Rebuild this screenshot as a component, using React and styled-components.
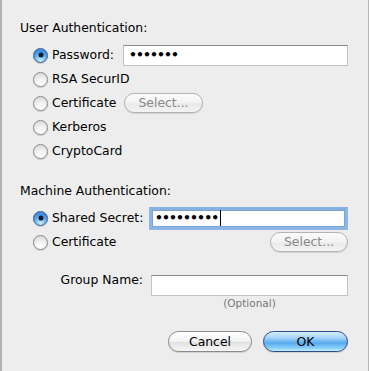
import React from "react";
import styled, { createGlobalStyle } from "styled-components";

const Global = createGlobalStyle`
  html, body { margin: 0; padding: 0; background: #ededed; }
  body { font-family: "DejaVu Sans", "Liberation Sans", sans-serif; }
`;

const Dialog = styled.div`
  box-sizing: border-box;
  width: 369px;
  height: 371px;
  background: #ededed;
  border-left: 2px solid #b2b2b2;
  border-right: 1px solid #b6b6b6;
  padding: 20px 20px 0 18px;
  display: flex;
  flex-direction: column;
  font-family: "DejaVu Sans", "Liberation Sans", sans-serif;
  font-size: 12.4px;
  color: #000;
`;

const SectionTitle = styled.div`
  height: 16px;
  line-height: 16px;
  margin-top: ${(p) => p.$top || 0}px;
  margin-bottom: 7px;
`;

const OptionList = styled.div`
  display: flex;
  flex-direction: column;
  padding-left: 13px;
`;

const OptionRow = styled.div`
  display: flex;
  align-items: center;
  height: 24px;
`;

const RadioLabel = styled.label`
  display: flex;
  align-items: center;
  gap: 4px;
  flex-shrink: 0;
  width: ${(p) => (p.$w ? `${p.$w}px` : "auto")};
  line-height: 16px;
  white-space: nowrap;
`;

const Radio = styled.span`
  box-sizing: border-box;
  position: relative;
  flex-shrink: 0;
  width: 15px;
  height: 15px;
  border-radius: 50%;
  border: 1px solid ${(p) => (p.$checked ? "#3a5e90" : "#8a8a8a")};
  background: ${(p) =>
    p.$checked
      ? "radial-gradient(circle at 50% 88%, #c8f0ff 0%, #7cc0f4 35%, #3f8be0 70%, #4f94de 100%)"
      : "radial-gradient(circle at 50% 88%, #ffffff 0%, #f4f4f4 40%, #d2d2d2 100%)"};
  box-shadow: 0 1px 1px rgba(0, 0, 0, 0.15);

  &::after {
    content: "";
    display: ${(p) => (p.$checked ? "block" : "none")};
    position: absolute;
    left: 50%;
    top: 50%;
    width: 5px;
    height: 5px;
    transform: translate(-50%, -50%);
    border-radius: 50%;
    background: #101b30;
  }
`;

const TextField = styled.div`
  box-sizing: border-box;
  flex: ${(p) => (p.$w ? "none" : "1")};
  width: ${(p) => (p.$w ? `${p.$w}px` : "auto")};
  height: ${(p) => (p.$focused ? 23 : 21)}px;
  background: #fff;
  border: ${(p) => (p.$focused ? "3px solid #8db6e6" : "1px solid #c2c2c2")};
  border-top-color: ${(p) => (p.$focused ? "#86b0e2" : "#8a8a8a")};
  box-shadow: ${(p) => (p.$focused ? "inset 0 0 0 1px #7aa3d6" : "none")};
  display: flex;
  align-items: center;
  padding-left: ${(p) => (p.$focused ? 3 : 5)}px;
  font-size: 12.4px;
  font-weight: bold;
  letter-spacing: -0.9px;
  line-height: 16px;
  color: #000;
  margin-top: ${(p) => p.$mt || 0}px;
`;

const Caret = styled.span`
  display: inline-block;
  width: 1px;
  height: 16px;
  background: #000;
  margin-left: 2px;
`;

const PillButton = styled.button`
  box-sizing: border-box;
  width: ${(p) => p.$w}px;
  height: ${(p) => p.$h || 21}px;
  margin-left: ${(p) => (p.$right ? "auto" : "0")};
  border-radius: 11px;
  padding: 0;
  font-family: "DejaVu Sans", "Liberation Sans", sans-serif;
  font-size: 12.4px;
  line-height: 16px;
  color: ${(p) => (p.disabled ? "#8a8a8a" : "#000")};
  border: 1px solid ${(p) => (p.$primary ? "#2c4b8a" : p.disabled ? "#b3b3b3" : "#8a8a8a")};
  background: ${(p) =>
    p.$primary
      ? "linear-gradient(#d6edff 0%, #a6d4f8 30%, #6eb6f0 50%, #58a9ee 58%, #8ad0ff 85%, #c6efff 100%)"
      : p.disabled
      ? "linear-gradient(#fbfbfb 0%, #f3f3f3 50%, #e9e9e9 55%, #f4f4f4 100%)"
      : "linear-gradient(#ffffff 0%, #f4f4f4 48%, #e2e2e2 55%, #f7f7f7 100%)"};
  box-shadow: 0 1px 1px rgba(0, 0, 0, 0.12);
`;

const GroupRow = styled.div`
  display: flex;
  justify-content: flex-end;
  align-items: flex-start;
  margin-top: 18px;
`;

const FieldLabel = styled.label`
  line-height: 16px;
  margin-right: 8px;
`;

const FieldColumn = styled.div`
  display: flex;
  flex-direction: column;
  align-items: center;
  width: 197px;
`;

const Hint = styled.div`
  margin-top: 1px;
  font-size: 10.5px;
  line-height: 12px;
  color: #777;
`;

const ButtonRow = styled.div`
  display: flex;
  justify-content: flex-end;
  gap: 11px;
  margin-top: 22px;
`;

function Option({ checked, label, w, children }) {
  return (
    <OptionRow>
      <RadioLabel $w={w}>
        <Radio $checked={checked} />
        {label}
      </RadioLabel>
      {children}
    </OptionRow>
  );
}

export default function App() {
  return (
    <>
      <Global />
      <Dialog>
        <SectionTitle>User Authentication:</SectionTitle>
        <OptionList>
          <Option checked label="Password:" w={90}>
            <TextField>•••••••</TextField>
          </Option>
          <Option label="RSA SecurID" />
          <Option label="Certificate" w={91}>
            <PillButton $w={79} $h={20} disabled>
              Select...
            </PillButton>
          </Option>
          <Option label="Kerberos" />
          <Option label="CryptoCard" />
        </OptionList>

        <SectionTitle $top={20}>Machine Authentication:</SectionTitle>
        <OptionList>
          <Option checked label="Shared Secret:" w={116}>
            <TextField $focused>
              •••••••••
              <Caret />
            </TextField>
          </Option>
          <Option label="Certificate">
            <PillButton $w={78} $h={20} $right disabled>
              Select...
            </PillButton>
          </Option>
        </OptionList>

        <GroupRow>
          <FieldLabel>Group Name:</FieldLabel>
          <FieldColumn>
            <TextField $w={197} $mt={3} />
            <Hint>(Optional)</Hint>
          </FieldColumn>
        </GroupRow>

        <ButtonRow>
          <PillButton $w={84}>Cancel</PillButton>
          <PillButton $w={85} $primary>
            OK
          </PillButton>
        </ButtonRow>
      </Dialog>
    </>
  );
}
